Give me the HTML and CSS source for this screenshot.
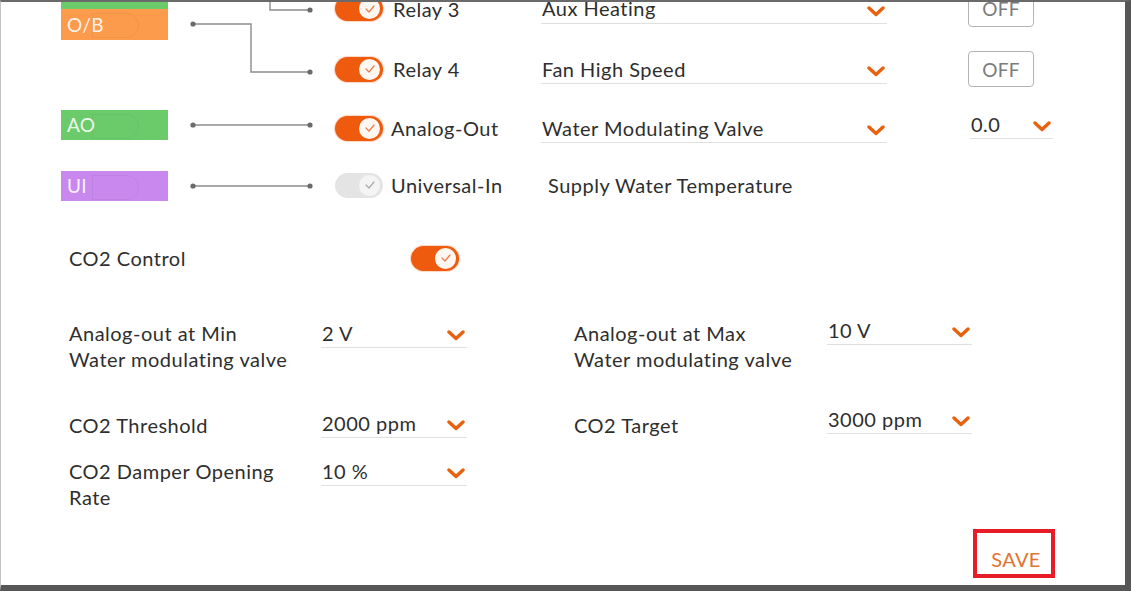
FILE: index.html
```html
<!DOCTYPE html>
<html lang="en">
<head>
<meta charset="utf-8">
<title>CO2 Settings</title>
<link rel="stylesheet" href="styles.css">
</head>
<body>
<div class="frame">
  <div class="content">
    <section class="diagram">
      <div class="tags">
        <div class="tag tag-green tag-do"></div>
        <div class="tag tag-orange">O/B</div>
        <div class="tag tag-green tag-ao">AO</div>
        <div class="tag tag-purple tag-ui">UI</div>
      </div>
      <svg class="wires" width="167" height="240" viewBox="0 0 167 240">
        <g fill="none" stroke="#8c8c8c" stroke-width="1.4">
          <polyline points="102,0 102,32 142,32"/>
          <polyline points="25,46 83,46 83,94 142,94"/>
          <line x1="25" y1="147" x2="142" y2="147"/>
          <line x1="25" y1="208" x2="142" y2="208"/>
        </g>
        <g fill="#6a6a6a">
          <circle cx="142" cy="32" r="2.6"/>
          <circle cx="25" cy="46" r="2.6"/>
          <circle cx="142" cy="94" r="2.6"/>
          <circle cx="25" cy="147" r="2.6"/>
          <circle cx="142" cy="147" r="2.6"/>
          <circle cx="25" cy="208" r="2.6"/>
          <circle cx="142" cy="208" r="2.6"/>
        </g>
      </svg>
      <div class="rows">
        <div class="row">
          <span class="toggle on"><span class="knob"><svg viewBox="0 0 10 8" width="10" height="8"><polyline points="1,4 4,7 9,1"/></svg></span></span>
          <span class="row-label">Relay 3</span>
          <div class="select"><span>Aux Heating</span><svg class="chev" viewBox="0 0 18 11" width="18" height="11"><polyline points="2,2 9,8.5 16,2"/></svg></div>
          <span></span>
          <button class="off">OFF</button>
        </div>
        <div class="row">
          <span class="toggle on"><span class="knob"><svg viewBox="0 0 10 8" width="10" height="8"><polyline points="1,4 4,7 9,1"/></svg></span></span>
          <span class="row-label">Relay 4</span>
          <div class="select"><span>Fan High Speed</span><svg class="chev" viewBox="0 0 18 11" width="18" height="11"><polyline points="2,2 9,8.5 16,2"/></svg></div>
          <span></span>
          <button class="off">OFF</button>
        </div>
        <div class="row">
          <span class="toggle on"><span class="knob"><svg viewBox="0 0 10 8" width="10" height="8"><polyline points="1,4 4,7 9,1"/></svg></span></span>
          <span class="row-label row-label-tight">Analog-Out</span>
          <div class="select"><span>Water Modulating Valve</span><svg class="chev" viewBox="0 0 18 11" width="18" height="11"><polyline points="2,2 9,8.5 16,2"/></svg></div>
          <span></span>
          <div class="select select-small"><span>0.0</span><svg class="chev" viewBox="0 0 18 11" width="18" height="11"><polyline points="2,2 9,8.5 16,2"/></svg></div>
        </div>
        <div class="row">
          <span class="toggle"><span class="knob"><svg viewBox="0 0 10 8" width="10" height="8"><polyline points="1,4 4,7 9,1"/></svg></span></span>
          <span class="row-label row-label-tight">Universal-In</span>
          <span class="plain">Supply Water Temperature</span>
        </div>
      </div>
    </section>

    <section class="co2-row">
      <span>CO2 Control</span>
      <span class="toggle on"><span class="knob"><svg viewBox="0 0 10 8" width="10" height="8"><polyline points="1,4 4,7 9,1"/></svg></span></span>
    </section>

    <section class="settings">
      <div class="set-label">Analog-out at Min<br>Water modulating valve</div>
      <div class="select"><span>2 V</span><svg class="chev" viewBox="0 0 18 11" width="18" height="11"><polyline points="2,2 9,8.5 16,2"/></svg></div>
      <div class="spacer"></div>
      <div class="set-label">Analog-out at Max<br>Water modulating valve</div>
      <div class="select select-hi"><span>10 V</span><svg class="chev" viewBox="0 0 18 11" width="18" height="11"><polyline points="2,2 9,8.5 16,2"/></svg></div>

      <div class="set-label">CO2 Threshold</div>
      <div class="select select-mid"><span>2000 ppm</span><svg class="chev" viewBox="0 0 18 11" width="18" height="11"><polyline points="2,2 9,8.5 16,2"/></svg></div>
      <div class="spacer"></div>
      <div class="set-label">CO2 Target</div>
      <div class="select select-top"><span>3000 ppm</span><svg class="chev" viewBox="0 0 18 11" width="18" height="11"><polyline points="2,2 9,8.5 16,2"/></svg></div>

      <div class="set-label">CO2 Damper Opening<br>Rate</div>
      <div class="select"><span>10 %</span><svg class="chev" viewBox="0 0 18 11" width="18" height="11"><polyline points="2,2 9,8.5 16,2"/></svg></div>
    </section>

    <div class="save-wrap">
      <button class="save">SAVE</button>
    </div>
  </div>
</div>
</body>
</html>
```

FILE: styles.css
```css
* { box-sizing: border-box; }

html, body {
  margin: 0;
  padding: 0;
  background: #ffffff;
}

body {
  font-family: Lato, "Open Sans", "Liberation Sans", sans-serif;
  font-size: 20px;
  letter-spacing: 0.5px;
  color: #2e2e2e;
}

.frame {
  width: 1131px;
  height: 591px;
  border-top: 2px solid #6a6a6a;
  border-left: 1px solid #c4c4c4;
  border-right: 6px solid #575757;
  border-bottom: 6px solid #575757;
  overflow: hidden;
  background: #fff;
}

.content {
  width: 100%;
}

/* ---------- wiring diagram ---------- */
.diagram {
  display: flex;
  align-items: flex-start;
  margin-top: -24px;
  padding-left: 60px;
  height: 235px;
}

.tags {
  width: 107px;
  display: flex;
  flex-direction: column;
}

.tag {
  position: relative;
  height: 31px;
  line-height: 31px;
  padding-left: 6px;
  font-size: 19px;
  letter-spacing: 0.3px;
  color: rgba(255, 255, 255, 0.9);
}

.tag::after {
  content: "";
  position: absolute;
  left: 31px;
  top: 4px;
  width: 45px;
  height: 23px;
  border: 1px solid rgba(0, 0, 0, 0.045);
  border-radius: 0 12px 12px 0;
}

.tag-do::after { display: none; }

.tag-green { background: #6bcb6b; }
.tag-orange { background: #fb9b4b; }
.tag-purple { background: #c888ee; }

.tag-ao { margin-top: 70px; height: 30px; line-height: 30px; }
.tag-ui { margin-top: 31px; height: 30px; line-height: 30px; }

.wires {
  display: block;
  flex: none;
}

.rows {
  display: grid;
  grid-template-rows: 61px 60px 58px 56px;
}

.row {
  display: grid;
  grid-template-columns: 48px 158px 346px 81px 84px;
  align-items: center;
}

.row-label {
  padding-left: 10px;
}

.row-label-tight {
  padding-left: 8px;
}

.plain {
  padding-left: 7px;
  grid-column: 3 / span 2;
}

/* ---------- toggle ---------- */
.toggle {
  position: relative;
  display: inline-flex;
  align-items: center;
  justify-content: flex-end;
  width: 48px;
  height: 25px;
  border-radius: 13px;
  background: #e4e4e4;
  padding-right: 3px;
}

.toggle.on {
  background: #ee5a0e;
  box-shadow: 0 0 1px 1px rgba(238, 90, 14, 0.25);
}

.knob {
  width: 21px;
  height: 21px;
  border-radius: 50%;
  background: #f4f4f4;
  display: flex;
  align-items: center;
  justify-content: center;
}

.toggle.on .knob {
  background: #fff7f2;
}

.knob svg polyline {
  fill: none;
  stroke: #a8a8a8;
  stroke-width: 1.2;
  stroke-linecap: round;
  stroke-linejoin: round;
}

.toggle.on .knob svg polyline {
  stroke: #ec7a48;
}

/* ---------- select ---------- */
.select {
  display: flex;
  align-items: center;
  justify-content: space-between;
  height: 30px;
  border-bottom: 1px solid #e0e0e0;
  padding-left: 1px;
}

.chev {
  flex: none;
  margin-right: 2px;
  margin-top: 6px;
}

.chev polyline {
  fill: none;
  stroke: #e8610f;
  stroke-width: 3.4;
  stroke-linecap: round;
  stroke-linejoin: round;
}

.select-small {
  width: 83px;
  margin-left: 2px;
  margin-bottom: 8px;
}

.off {
  width: 66px;
  height: 36px;
  border: 1px solid #b3b3b3;
  border-radius: 4px;
  background: #fff;
  color: #7c7c7c;
  font-family: inherit;
  font-size: 19px;
  letter-spacing: 0.3px;
  padding: 0;
}

/* ---------- CO2 control ---------- */
.co2-row {
  display: grid;
  grid-template-columns: 342px 48px;
  align-items: center;
  height: 32px;
  margin-top: 29px;
  padding-left: 68px;
}

/* ---------- settings ---------- */
.settings {
  display: grid;
  grid-template-columns: 252px 146px 107px 253px 145px;
  grid-template-rows: 72px 26px 52px;
  row-gap: 20px;
  margin-top: 46px;
  padding-left: 68px;
}

.set-label {
  line-height: 26px;
}

.settings .select {
  align-self: start;
  margin-top: -2px;
}

.settings .select-hi { margin-top: -5px; }
.settings .select-mid { margin-top: -4px; }
.settings .select-top { margin-top: -8px; }

/* ---------- save ---------- */
.save-wrap {
  display: flex;
  justify-content: flex-end;
  margin-top: 19px;
  padding-right: 70px;
}

.save {
  width: 82px;
  height: 49px;
  border: 4px solid #e81c26;
  background: #fff;
  color: #e2742f;
  font-family: inherit;
  font-size: 20px;
  letter-spacing: 0.3px;
  padding: 11px 0 0 4px;
  text-align: center;
}
```
